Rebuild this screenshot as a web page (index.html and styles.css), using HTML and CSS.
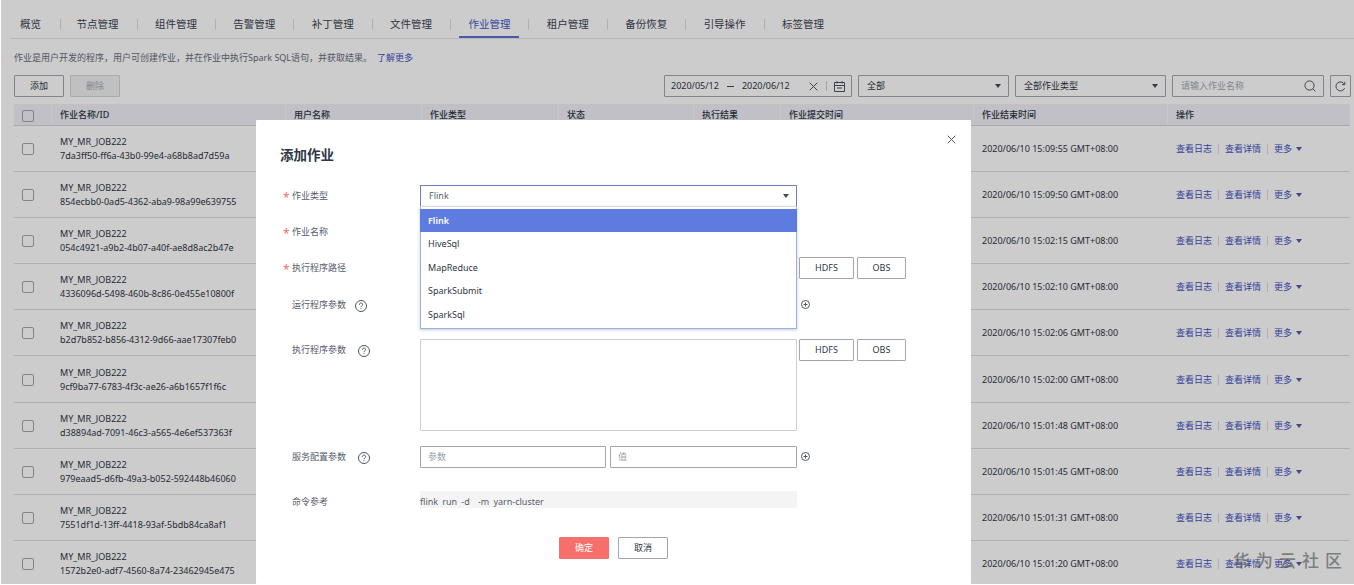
FILE: index.html
```html
<!DOCTYPE html>
<html lang="zh-CN">
<head>
  <meta charset="UTF-8">
  <meta name="viewport" content="width=device-width, initial-scale=1.0">
  <title>作业管理</title>
  <link rel="stylesheet" href="styles.css">
</head>
<body>
  <nav class="tabs">
    <a class="tab first">概览</a>
    <a class="tab">节点管理</a>
    <a class="tab">组件管理</a>
    <a class="tab">告警管理</a>
    <a class="tab">补丁管理</a>
    <a class="tab">文件管理</a>
    <a class="tab active">作业管理</a>
    <a class="tab">租户管理</a>
    <a class="tab">备份恢复</a>
    <a class="tab">引导操作</a>
    <a class="tab">标签管理</a>
  </nav>

  <p class="intro">作业是用户开发的程序，用户可创建作业，并在作业中执行Spark SQL语句，并获取结果。<a class="more">了解更多</a></p>

  <div class="toolbar">
    <button class="btn">添加</button>
    <button class="btn disabled">删除</button>
    <div class="filters">
      <div class="box date">
        <span class="day">2020/05/12</span>
        <span class="dash"></span>
        <span class="day">2020/06/12</span>
        <svg class="clear" width="9" height="9" viewBox="0 0 9 9"><path d="M.7.7l7.6 7.6M8.3.7L.7 8.3"/></svg>
        <span class="bar"></span>
        <svg class="calendar" width="11" height="11" viewBox="0 0 11 11"><path d="M.5 1.5h10v9H.5zM3 0v2.500M8 0v2.500M.5 4.500h10M3 7h5"/></svg>
      </div>
      <div class="box select">全部<i class="arrow"></i></div>
      <div class="box select type">全部作业类型<i class="arrow"></i></div>
      <div class="box search">请输入作业名称<svg width="12" height="12" viewBox="0 0 12 12"><circle cx="5.500" cy="5.500" r="4.600"/><path d="M8.800 8.800l2.500 2.500"/></svg></div>
      <div class="box refresh"><svg width="11" height="11" viewBox="0 0 11 11"><path d="M9.600 7.200A4.500 4.500 0 1 1 9.300 3M9.800.8v2.800H7"/></svg></div>
    </div>
  </div>

  <div class="table">
    <div class="row head">
      <span class="check"><i></i></span>
      <span>作业名称/ID</span>
      <span>用户名称</span>
      <span>作业类型</span>
      <span>状态</span>
      <span>执行结果</span>
      <span>作业提交时间</span>
      <span>作业结束时间</span>
      <span>操作</span>
    </div>
    <div id="rows"></div>
  </div>

  <div class="mask"></div>

  <div class="modal">
    <svg class="close" width="9" height="9" viewBox="0 0 9 9"><path d="M.7.7l7.600 7.600M8.300.7L.7 8.300"/></svg>
    <h2>添加作业</h2>
    <div class="field">
      <label class="required">作业类型</label>
      <div class="dropdown">
        <div class="current">Flink<i class="arrow"></i></div>
        <ul class="menu">
          <li class="selected">Flink</li>
          <li>HiveSql</li>
          <li>MapReduce</li>
          <li>SparkSubmit</li>
          <li>SparkSql</li>
        </ul>
      </div>
    </div>
    <div class="field">
      <label class="required">作业名称</label>
      <input class="wide" type="text">
    </div>
    <div class="field">
      <label class="required">执行程序路径</label>
      <input class="wide" type="text">
      <button class="btn hdfs">HDFS</button>
      <button class="btn obs">OBS</button>
    </div>
    <div class="field">
      <label>运行程序参数<svg class="help near" width="12" height="12" viewBox="0 0 12 12"><circle cx="6" cy="6" r="5.500"/><path d="M4.300 4.800c0-2.300 3.400-2.200 3.400-.2 0 1.200-1.700 1.200-1.700 2.600M6 8.200v1"/></svg></label>
      <input class="half" type="text">
      <input class="half" type="text">
      <svg class="plus" width="9" height="9" viewBox="0 0 9 9"><circle cx="4.500" cy="4.500" r="4"/><path d="M2.500 4.500h4M4.500 2.500v4"/></svg>
    </div>
    <div class="field args">
      <label>执行程序参数<svg class="help" width="12" height="12" viewBox="0 0 12 12"><circle cx="6" cy="6" r="5.500"/><path d="M4.300 4.800c0-2.300 3.400-2.200 3.400-.2 0 1.200-1.700 1.200-1.700 2.600M6 8.200v1"/></svg></label>
      <textarea></textarea>
      <button class="btn hdfs">HDFS</button>
      <button class="btn obs">OBS</button>
    </div>
    <div class="field service">
      <label>服务配置参数<svg class="help" width="12" height="12" viewBox="0 0 12 12"><circle cx="6" cy="6" r="5.500"/><path d="M4.300 4.800c0-2.300 3.400-2.200 3.400-.2 0 1.200-1.700 1.200-1.700 2.600M6 8.200v1"/></svg></label>
      <input class="half" type="text" placeholder="参数">
      <input class="half" type="text" placeholder="值">
      <svg class="plus" width="9" height="9" viewBox="0 0 9 9"><circle cx="4.500" cy="4.500" r="4"/><path d="M2.500 4.500h4M4.500 2.500v4"/></svg>
    </div>
    <div class="field command">
      <label>命令参考</label>
      <pre>flink run -d  -m yarn-cluster</pre>
    </div>
    <div class="actions">
      <button class="btn primary">确定</button>
      <button class="btn">取消</button>
    </div>
  </div>

  <div class="watermark">华为云社区</div>

  <script>
    const jobs = [
      ["7da3ff50-ff6a-43b0-99e4-a68b8ad7d59a", "15:09:55"],
      ["854ecbb0-0ad5-4362-aba9-98a99e639755", "15:09:50"],
      ["054c4921-a9b2-4b07-a40f-ae8d8ac2b47e", "15:02:15"],
      ["4336096d-5498-460b-8c86-0e455e10800f", "15:02:10"],
      ["b2d7b852-b856-4312-9d66-aae17307feb0", "15:02:06"],
      ["9cf9ba77-6783-4f3c-ae26-a6b1657f1f6c", "15:02:00"],
      ["d38894ad-7091-46c3-a565-4e6ef537363f", "15:01:48"],
      ["979eaad5-d6fb-49a3-b052-592448b46060", "15:01:45"],
      ["7551df1d-13ff-4418-93af-5bdb84ca8af1", "15:01:31"],
      ["1572b2e0-adf7-4560-8a74-23462945e475", "15:01:20"]
    ];

    document.getElementById("rows").innerHTML = jobs.map(([id, time]) => `
      <div class="row">
        <span class="check"><i></i></span>
        <span class="name">MY_MR_JOB222<br>${id}</span>
        <span class="end">2020/06/10 ${time} GMT+08:00</span>
        <span class="ops"><a>查看日志</a><a>查看详情</a><a>更多<i class="arrow"></i></a></span>
      </div>`).join("");
  </script>
</body>
</html>
```
FILE: styles.css
```css
* {
  box-sizing: border-box;
}
body {
  font-family: "Noto Sans", "Noto Sans CJK SC", sans-serif;
  font-size: 9px;
  line-height: 14px;
  color: #2f3544;
  background: #fff;
  margin: 0;
  height: 585px;
  overflow: hidden;
  position: relative;
}
svg {
  fill: none;
  stroke: #505664;
  stroke-width: 1;
  flex: none;
}
input, button, textarea {
  font: inherit;
  color: inherit;
}
a {
  color: #3f51c4;
}

/* tabs */
.tabs {
  display: flex;
  height: 39px;
  margin-left: 10px;
  border-bottom: 1px solid #e4e4e4;
}
.tab {
  width: 60px;
  height: 38px;
  padding-top: 17px;
  margin-right: 18.400px;
  text-align: center;
  font-size: 10.5px;
  color: #3c4250;
  position: relative;
}
.tab.first {
  width: 41px;
  margin-right: 16.500px;
}
.tab::after {
  content: "";
  position: absolute;
  right: -10px;
  top: 19px;
  height: 11px;
  border-right: 1px solid #dcdcdc;
}
.tab:last-child::after {
  display: none;
}
.tab.active {
  color: #4558c8;
  border-bottom: 2px solid #5e6ed8;
}

.intro {
  margin: 12px 0 0 14px;
  color: #666c7a;
}
.more {
  margin-left: 5px;
}

/* toolbar */
.toolbar {
  display: flex;
  gap: 6px;
  margin: 10px 3px 7px 14px;
  height: 22px;
}
.btn {
  width: 50px;
  height: 22px;
  padding: 0;
  border: 1px solid #a3a6ae;
  border-radius: 1px;
  background: #fff;
}
.btn.disabled {
  background: #f0f0f2;
  border-color: #d4d5d8;
  color: #a5a8b0;
}
.filters {
  display: flex;
  gap: 6px;
  margin-left: auto;
}
.box {
  display: flex;
  align-items: center;
  border: 1px solid #a3a6ae;
  border-radius: 1px;
  height: 22px;
  padding: 0 8px;
}
.date {
  width: 188px;
  padding: 0 6px;
}
.dash {
  width: 7px;
  margin: 0 8px;
  border-top: 1px solid #444a58;
}
.clear {
  margin-left: auto;
}
.bar {
  height: 10px;
  margin: 0 7px 0 8px;
  border-left: 1px solid #ccc;
}
.select {
  width: 151px;
}
.select .arrow {
  margin-right: -1px;
}
.search {
  width: 152px;
  color: #a5a8b0;
  justify-content: space-between;
  padding-right: 7px;
}
.refresh {
  width: 21px;
  padding: 0;
  justify-content: center;
}
.arrow {
  margin-left: auto;
  border: 3.500px solid transparent;
  border-top: 4px solid #444a58;
  border-bottom: 0;
}

/* job table */
.table {
  margin: 0 4px 0 14px;
}
.row {
  display: grid;
  grid-template-columns: 37px 234px 136px 137px 135px 87px 193px 194px 1fr;
  align-items: center;
  height: 46.1px;
  padding-top: 1px;
  border-bottom: 1px solid #dcdde0;
}
.row span {
  padding-left: 9px;
}
.row .check {
  padding-left: 8px;
}
.head {
  height: 22px;
  padding: 0;
  background: #f0f1f8;
  border-bottom-color: #ced4e0;
  font-weight: 500;
}
.head span {
  line-height: 21px;
  padding-left: 8px;
  border-left: 1px solid #fafafc;
}
.head .check {
  border: 0;
  padding-top: 2px;
}
.check i {
  display: block;
  width: 12px;
  height: 12px;
  border: 1px solid #a3a6ae;
  border-radius: 2px;
}
.end {
  grid-column: 8;
}
.ops {
  display: flex;
}
.ops a {
  display: flex;
  align-items: center;
  line-height: 10px;
}
.ops a + a {
  margin-left: 6px;
  padding-left: 6px;
  border-left: 1px solid #dcdde0;
}
.ops .arrow {
  margin-left: 4px;
  border-width: 4px 3px 0;
  border-top-color: #4f5fae;
}

.mask {
  position: absolute;
  inset: 0 0 1px 1px;
  background: rgba(0, 0, 0, 0.2);
}

/* add job dialog */
.modal {
  position: absolute;
  left: 256px;
  top: 120px;
  width: 715px;
  height: 464px;
  background: #fff;
  border-radius: 1px;
  padding: 24px 24px 0;
}
.close {
  position: absolute;
  right: 15px;
  top: 15px;
}
.modal h2 {
  margin: 0 0 20px;
  font-size: 13.5px;
  line-height: 22px;
  height: 21px;
  font-weight: 700;
}
.field {
  display: flex;
  height: 22px;
  margin-bottom: 14.200px;
}
.field label {
  display: flex;
  align-items: center;
  width: 140px;
  height: 22px;
  padding-left: 12px;
  color: #575d6c;
}
.field label.required {
  padding-left: 3px;
}
.required::before {
  content: "*";
  width: 9px;
  color: #f66f6a;
  font-size: 12px;
  line-height: 10px;
  padding-top: 4px;
}
.help {
  margin: 2px 0 0 12px;
}
.help.near {
  margin-left: 9px;
}
.dropdown {
  position: relative;
  width: 377px;
}
.current {
  display: flex;
  align-items: center;
  height: 22px;
  padding: 0 7px 0 8px;
  border: 1px solid #6e7fc4;
  border-bottom-color: #d8dbe4;
  color: #575d6c;
}
.menu {
  position: absolute;
  top: 21px;
  left: 0;
  width: 377px;
  height: 123px;
  margin: 0;
  padding: 2px 0 0;
  list-style: none;
  background: #fff;
  border: 1px solid #a0afd6;
  border-top-color: #d8dbe4;
  box-shadow: 0 1px 3px rgba(60, 80, 140, 0.3);
}
.menu li {
  height: 23.400px;
  line-height: 23px;
  padding-left: 7px;
}
.menu .selected {
  margin: 0 -1px;
  padding-left: 8px;
  background: #5e7ce0;
  color: #fff;
  font-weight: 600;
}
.field input, .field textarea {
  border: 1px solid #a3a6ae;
  border-radius: 1px;
  padding: 0 7px;
  outline: none;
}
.wide {
  width: 377px;
}
.half {
  width: 186px;
}
.half + .half {
  width: 187px;
  margin-left: 4px;
}
.field ::placeholder {
  color: #9a9ea8;
}
.hdfs {
  width: 55px;
  margin: 0 3px 0 2px;
}
.obs {
  width: 49px;
}
.plus {
  margin: 6px 0 0 4px;
}
.args {
  height: 92px;
  margin: 23.400px 0 15px;
}
.field textarea {
  width: 377px;
  height: 92px;
  border-color: #ccced4;
  resize: none;
}
.service {
  margin-bottom: 23px;
}
.command {
  margin-bottom: 24px;
}
.command pre {
  width: 377px;
  height: 17px;
  margin: 0;
  padding-top: 4px;
  font-family: inherit;
  color: #575d6c;
  background: #f4f4f4;
  word-spacing: 1.800px;
}
.actions {
  display: flex;
  justify-content: center;
  gap: 9px;
}
.btn.primary {
  background: #f66f6a;
  border-color: #f66f6a;
  color: #fff;
}

.watermark {
  position: absolute;
  right: 6px;
  bottom: 12px;
  font-size: 17px;
  line-height: 24px;
  letter-spacing: 6px;
  font-weight: 500;
  color: rgba(90, 90, 90, 0.7);
}
```
